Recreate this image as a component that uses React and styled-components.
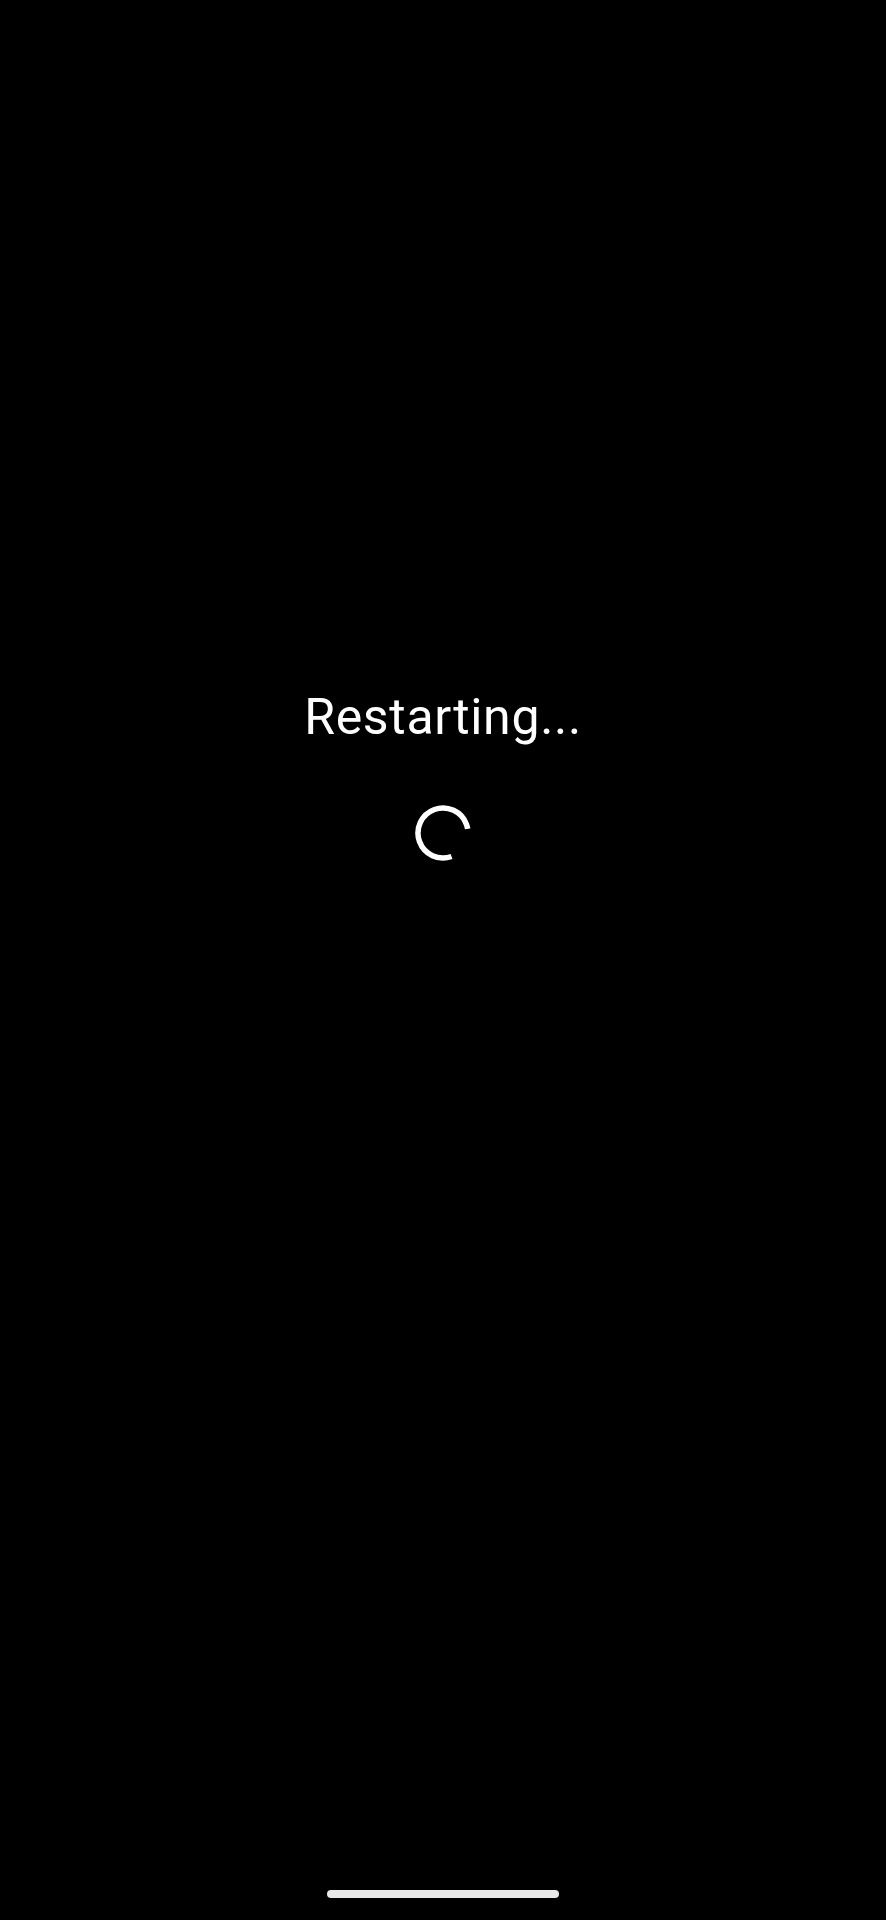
import styled, { createGlobalStyle } from "styled-components";

const GlobalStyle = createGlobalStyle`
  html, body {
    margin: 0;
    padding: 0;
    background: #000;
  }
`;

const Screen = styled.div`
  height: 1920px;
  display: flex;
  flex-direction: column;
  align-items: center;
  background: #000;
  color: #fff;
  font-family: Roboto, "Open Sans", sans-serif;
`;

const Content = styled.div`
  padding-top: 687px;
  display: flex;
  flex-direction: column;
  align-items: center;
  gap: 58px;
  flex: 1;
`;

const Title = styled.h1`
  margin: 0;
  font-size: 50px;
  line-height: 60px;
  font-weight: 400;
  letter-spacing: 0.7px;
`;

const Spinner = styled.svg`
  display: block;
  width: 56px;
  height: 56px;
`;

const HomeBar = styled.div`
  width: 232px;
  height: 8px;
  border-radius: 4px;
  background: #e8e8e8;
  margin-bottom: 22px;
`;

export default function App() {
  const r = 25;
  const circ = 2 * Math.PI * r;
  const arc = (279 / 360) * circ;

  return (
    <>
      <GlobalStyle />
      <Screen>
        <Content>
          <Title>Restarting...</Title>
          <Spinner viewBox="0 0 56 56">
            <circle
              cx="28"
              cy="28"
              r={r}
              fill="none"
              stroke="#fff"
              strokeWidth="5.5"
              strokeDasharray={`${arc} ${circ}`}
              transform="rotate(70 28 28)"
            />
          </Spinner>
        </Content>
        <HomeBar />
      </Screen>
    </>
  );
}
